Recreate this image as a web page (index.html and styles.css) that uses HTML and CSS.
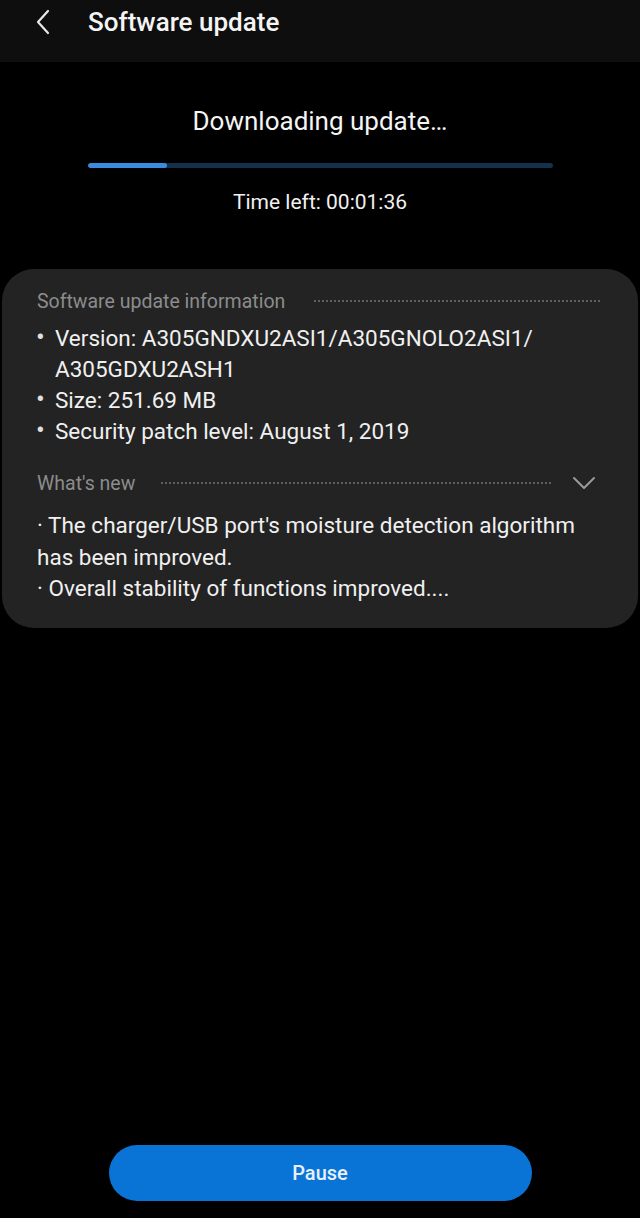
FILE: index.html
```html
<!DOCTYPE html>
<html>
<head>
<meta charset="utf-8">
<link rel="stylesheet" href="styles.css">
</head>
<body>
<div class="screen">
  <header class="appbar">
    <svg class="back" width="18" height="28" viewBox="0 0 18 28"><path d="M14 3 L4 14 L14 25" fill="none" stroke="#e8e8e8" stroke-width="2.2" stroke-linecap="round" stroke-linejoin="round"/></svg>
    <h1 class="title">Software update</h1>
  </header>
  <section class="status">
    <div class="status-title">Downloading update…</div>
    <div class="progress"><div class="progress-fill" style="width:17%"></div></div>
    <div class="time">Time left: 00:01:36</div>
  </section>
  <section class="card">
    <div class="sec-head"><span class="sec-label">Software update information</span><span class="dots"></span></div>
    <ul class="info">
      <li>Version: A305GNDXU2ASI1/A305GNOLO2ASI1/ A305GDXU2ASH1</li>
      <li>Size: 251.69 MB</li>
      <li>Security patch level: August 1, 2019</li>
    </ul>
    <div class="sec-head new-head"><span class="sec-label">What's new</span><span class="dots"></span>
      <svg class="chev" width="24" height="14" viewBox="0 0 24 14"><path d="M2 2 L12 12 L22 2" fill="none" stroke="#9a9a9a" stroke-width="2" stroke-linecap="round" stroke-linejoin="round"/></svg>
    </div>
    <div class="notes">
      <p>· The charger/USB port's moisture detection algorithm has been improved.</p>
      <p>· Overall stability of functions improved....</p>
    </div>
  </section>
  <div class="spacer"></div>
  <div class="actions"><button class="pause">Pause</button></div>
</div>
</body>
</html>
```
FILE: styles.css
```css
* { box-sizing: border-box; }
html, body { margin: 0; padding: 0; background: #000; }
body { font-family: Roboto, "Noto Sans", sans-serif; color: #f2f2f2; }
.screen { width: 640px; height: 1218px; display: flex; flex-direction: column; background: #000; }
.appbar { height: 62px; background: #0e0e0e; display: flex; align-items: flex-start; padding: 7px 0 0 34px; }
.back { margin-top: 1px; }
.title { margin: 0 0 0 36px; font-size: 26px; font-weight: 500; line-height: 30px; color: #f4f4f4; letter-spacing: 0; }
.status { display: flex; flex-direction: column; align-items: center; padding-top: 42px; }
.status-title { font-size: 26px; line-height: 34px; color: #f4f4f4; }
.progress { width: 465px; height: 5px; border-radius: 3px; background: #15304d; margin-top: 25px; overflow: hidden; }
.progress-fill { height: 100%; background: #3a8ae0; border-radius: 3px; }
.time { font-size: 21px; line-height: 26px; margin-top: 21px; color: #f0f0f0; }
.card { margin: 54px 2px 0 2px; background: #232323; border-radius: 32px; padding: 19px 38px 23px 35px; }
.sec-head { display: flex; align-items: center; height: 26px; }
.sec-label { font-size: 19.5px; color: #8c8c8c; white-space: nowrap; }
.dots { flex: 1; margin-left: 28px; height: 2px; background-image: radial-gradient(circle, #5f5f5f 0.8px, transparent 1px); background-size: 4px 2px; background-repeat: repeat-x; }
.info { list-style: none; margin: 9px 0 0 0; padding: 0; }
.info li { position: relative; padding-left: 18px; font-size: 22.5px; line-height: 31px; color: #f0f0f0; }
.info li::before { content: "•"; position: absolute; left: -1px; top: -1px; font-size: 26px; color: #e0e0e0; }
.new-head { margin-top: 23px; }
.new-head .dots { margin-left: 25px; flex: 1; }
.chev { margin: 0 4px 0 21px; flex: none; }
.notes { margin-top: 14px; }
.notes p { margin: 0; font-size: 22.5px; line-height: 31.5px; color: #f0f0f0; }
.spacer { flex: 1; }
.actions { display: flex; justify-content: center; padding-bottom: 17px; }
.pause { width: 423px; height: 56px; border: none; border-radius: 28px; background: #0a73d6; color: #e8f1fb; font-family: Roboto, sans-serif; font-size: 20px; font-weight: 500; }
```
